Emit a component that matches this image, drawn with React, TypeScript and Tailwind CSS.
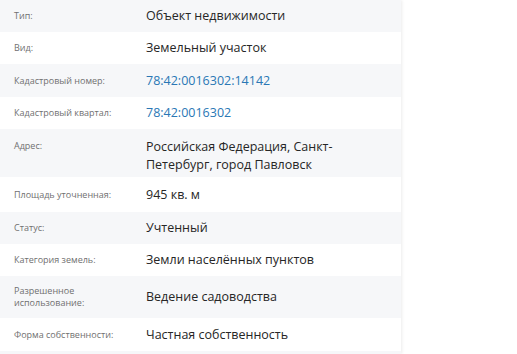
import React from "react";

type Row = {
  label: string;
  value: string;
  h: string;
  link?: boolean;
  top?: boolean;
};

const rows: Row[] = [
  { label: "Тип:", value: "Объект недвижимости", h: "h-[32px]" },
  { label: "Вид:", value: "Земельный участок", h: "h-[32px]" },
  { label: "Кадастровый номер:", value: "78:42:0016302:14142", h: "h-[33px]", link: true },
  { label: "Кадастровый квартал:", value: "78:42:0016302", h: "h-[32px]", link: true },
  {
    label: "Адрес:",
    value: "Российская Федерация, Санкт-Петербург, город Павловск",
    h: "h-[48px]",
    top: true,
  },
  { label: "Площадь уточненная:", value: "945 кв. м", h: "h-[35px]" },
  { label: "Статус:", value: "Учтенный", h: "h-[32px]" },
  { label: "Категория земель:", value: "Земли населённых пунктов", h: "h-[32px]" },
  { label: "Разрешенное использование:", value: "Ведение садоводства", h: "h-[42px]" },
  { label: "Форма собственности:", value: "Частная собственность", h: "h-[33px]" },
  { label: "", value: "", h: "h-[32px]" },
];

const App = () => {
  return (
    <div className="w-[517px] h-[354px] overflow-hidden bg-white font-['Open_Sans',sans-serif]">
      <div className="w-[401px] h-full bg-white shadow-[1px_0_3px_rgba(0,0,0,0.08)]">
        {rows.map((row, i) => (
          <div
            key={i}
            className={`flex ${row.top ? "items-start pt-[9px]" : "items-center"} ${row.h} ${
              i % 2 === 0 ? "bg-[#f6f7f9]" : "bg-white"
            }`}
          >
            <div
              className={`w-[146px] shrink-0 pl-[14px] pr-3 text-[9px] leading-[12px] text-[#707070] ${
                row.top ? "pt-[2px]" : ""
              }`}
            >
              {row.label}
            </div>
            <div
              className={`w-[230px] text-[12.5px] leading-[18px] ${
                row.link ? "text-[#2a77b5]" : "text-[#262626]"
              }`}
            >
              {row.value}
            </div>
          </div>
        ))}
      </div>
    </div>
  );
};

export default App;
